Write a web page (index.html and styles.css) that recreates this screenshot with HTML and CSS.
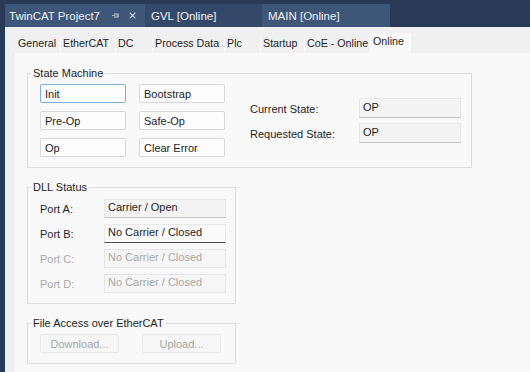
FILE: index.html
```html
<!DOCTYPE html>
<html lang="en">
<head>
    <meta charset="UTF-8">
    <title>TwinCAT Project7 - Online</title>
    <link rel="stylesheet" href="styles.css">
</head>
<body>
    <!-- Document tabs -->
    <div class="doc-bar">
        <div class="doc-tab doc-tab-project">
            <span class="doc-title">TwinCAT Project7</span>
            <svg class="doc-icon" width="10" height="9" viewBox="0 0 10 9"><path d="M0 4.5h3M3.5 1.5v6M3.5 2.5h4.5v4H3.5M6.5 2.5v4" stroke="#c9d2df" fill="none"/></svg>
            <svg class="doc-icon" width="9" height="9" viewBox="0 0 9 9"><path d="M1 1l7 7M8 1l-7 7" stroke="#dde3ec" stroke-width="1.3" fill="none"/></svg>
        </div>
        <div class="doc-tab doc-tab-gvl">GVL [Online]</div>
        <div class="doc-tab doc-tab-main">MAIN [Online]</div>
    </div>

    <div class="window">
        <!-- Property page tabs -->
        <div class="prop-tabs">
            <div class="prop-tab">General</div>
            <div class="prop-tab">EtherCAT</div>
            <div class="prop-tab">DC</div>
            <div class="prop-tab">Process Data</div>
            <div class="prop-tab">Plc</div>
            <div class="prop-tab">Startup</div>
            <div class="prop-tab">CoE - Online</div>
            <div class="prop-tab active">Online</div>
        </div>

        <div class="panel">
            <fieldset class="group group-state">
                <legend>State Machine</legend>
                <div class="state-body">
                    <div class="btn-grid">
                        <button class="sm-btn focused">Init</button>
                        <button class="sm-btn">Bootstrap</button>
                        <button class="sm-btn">Pre-Op</button>
                        <button class="sm-btn">Safe-Op</button>
                        <button class="sm-btn">Op</button>
                        <button class="sm-btn">Clear Error</button>
                    </div>
                    <div class="state-info">
                        <span>Current State:</span>
                        <div class="value">OP</div>
                        <span>Requested State:</span>
                        <div class="value">OP</div>
                    </div>
                </div>
            </fieldset>

            <fieldset class="group group-small">
                <legend>DLL Status</legend>
                <div class="dll-body">
                    <span>Port A:</span>
                    <div class="value port">Carrier / Open</div>
                    <span>Port B:</span>
                    <div class="value port active-port">No Carrier / Closed</div>
                    <span class="disabled">Port C:</span>
                    <div class="value port disabled">No Carrier / Closed</div>
                    <span class="disabled">Port D:</span>
                    <div class="value port disabled">No Carrier / Closed</div>
                </div>
            </fieldset>

            <fieldset class="group group-small">
                <legend>File Access over EtherCAT</legend>
                <div class="file-body">
                    <button class="file-btn" disabled>Download...</button>
                    <button class="file-btn" disabled>Upload...</button>
                </div>
            </fieldset>
        </div>
    </div>
</body>
</html>
```

FILE: styles.css
```css
body {
    margin: 0;
    height: 372px;
    overflow: hidden;
    background-color: #293a58;
    font-family: 'Liberation Sans', Arial, sans-serif;
    font-size: 11px;
    color: #1e1e1e;
}
/* Document tabs */
.doc-bar {
    display: flex;
    height: 23px;
    padding: 4px 0 0 5px;
}
.doc-tab {
    display: flex;
    align-items: center;
    flex-shrink: 0;
    white-space: nowrap;
    box-sizing: border-box;
    color: #eef1f5;
    font-size: 11.5px;
}
.doc-tab-project {
    width: 140px;
    padding-left: 4px;
    background-color: #3e5678;
}
.doc-title {
    margin-right: 12px;
}
.doc-icon {
    margin-right: 9px;
}
.doc-tab-gvl {
    width: 117px;
    padding-left: 6px;
    background-color: #34496a;
}
.doc-tab-main {
    width: 128px;
    padding-left: 6px;
    background-color: #3e5678;
}
.window {
    margin-left: 5px;
    height: 345px;
    background-color: #f0f0f0;
    display: flex;
    flex-direction: column;
}
/* Property page tabs */
.prop-tabs {
    display: grid;
    grid-template-columns: 45px 55px 37px 72px 36px 44px 65px 41px;
    align-items: end;
    height: 26px;
    padding-left: 11px;
    white-space: nowrap;
    font-size: 10.7px;
}
.prop-tab {
    height: 18px;
    line-height: 17px;
    padding-left: 2px;
    border-right: 1px solid #f8f8f8;
}
.prop-tab.active {
    height: 20px;
    line-height: 16px;
    padding-left: 3px;
    background-color: #f9f9f9;
    border-right: none;
}
.panel {
    flex: 1;
    margin-left: 10px;
    padding-left: 12px;
    background-color: #f9f9f9;
}
/* Group boxes */
.group {
    margin: 13px 0 0;
    padding: 0;
    border: 1px solid #dedede;
    box-sizing: border-box;
}
.group legend {
    margin-left: 3px;
    padding: 0 2px;
    line-height: 14px;
}
.group-state {
    width: 445px;
}
.group-small {
    width: 209px;
    margin-top: 12px;
}
.state-body {
    display: flex;
    align-items: center;
    padding: 4px 0 10px 12px;
}
.btn-grid {
    display: grid;
    grid-template-columns: 86px 86px;
    column-gap: 13px;
    row-gap: 8px;
}
button {
    font-family: inherit;
    font-size: 11px;
}
.sm-btn {
    height: 19px;
    padding: 0 4px;
    text-align: left;
    color: #1e1e1e;
    background-color: #fdfdfd;
    border: 1px solid #d8d8d8;
    border-radius: 2px;
}
.sm-btn.focused {
    border-color: #7eaee0;
}
.state-info {
    display: grid;
    grid-template-columns: 109px 102px;
    row-gap: 5px;
    align-items: center;
    margin-left: 25px;
}
.state-info span {
    padding-top: 2px;
}
.value {
    height: 20px;
    box-sizing: border-box;
    padding: 2px 3px;
    background-color: #f4f4f4;
    border: 1px solid #e8e8e8;
    border-bottom-color: #c2c2c2;
}
.dll-body {
    display: grid;
    grid-template-columns: 64px 122px;
    row-gap: 6px;
    align-items: center;
    padding: 5px 0 10px 12px;
}
.dll-body span {
    padding-top: 1px;
}
.value.port {
    height: 19px;
    padding-top: 1px;
}
.value.active-port {
    background-color: #fafafa;
    border-bottom-color: #4d4d4d;
}
.disabled {
    color: #a8a8a8;
}
.value.disabled {
    background-color: #f6f6f6;
    border-color: #e6e6e6;
}
.file-body {
    display: flex;
    gap: 23px;
    padding: 4px 0 10px 12px;
}
.file-btn {
    width: 79px;
    height: 19px;
    padding: 0;
    color: #a6a6a6;
    background-color: #f7f7f7;
    border: 1px solid #e8e8e8;
    border-radius: 2px;
}
```
